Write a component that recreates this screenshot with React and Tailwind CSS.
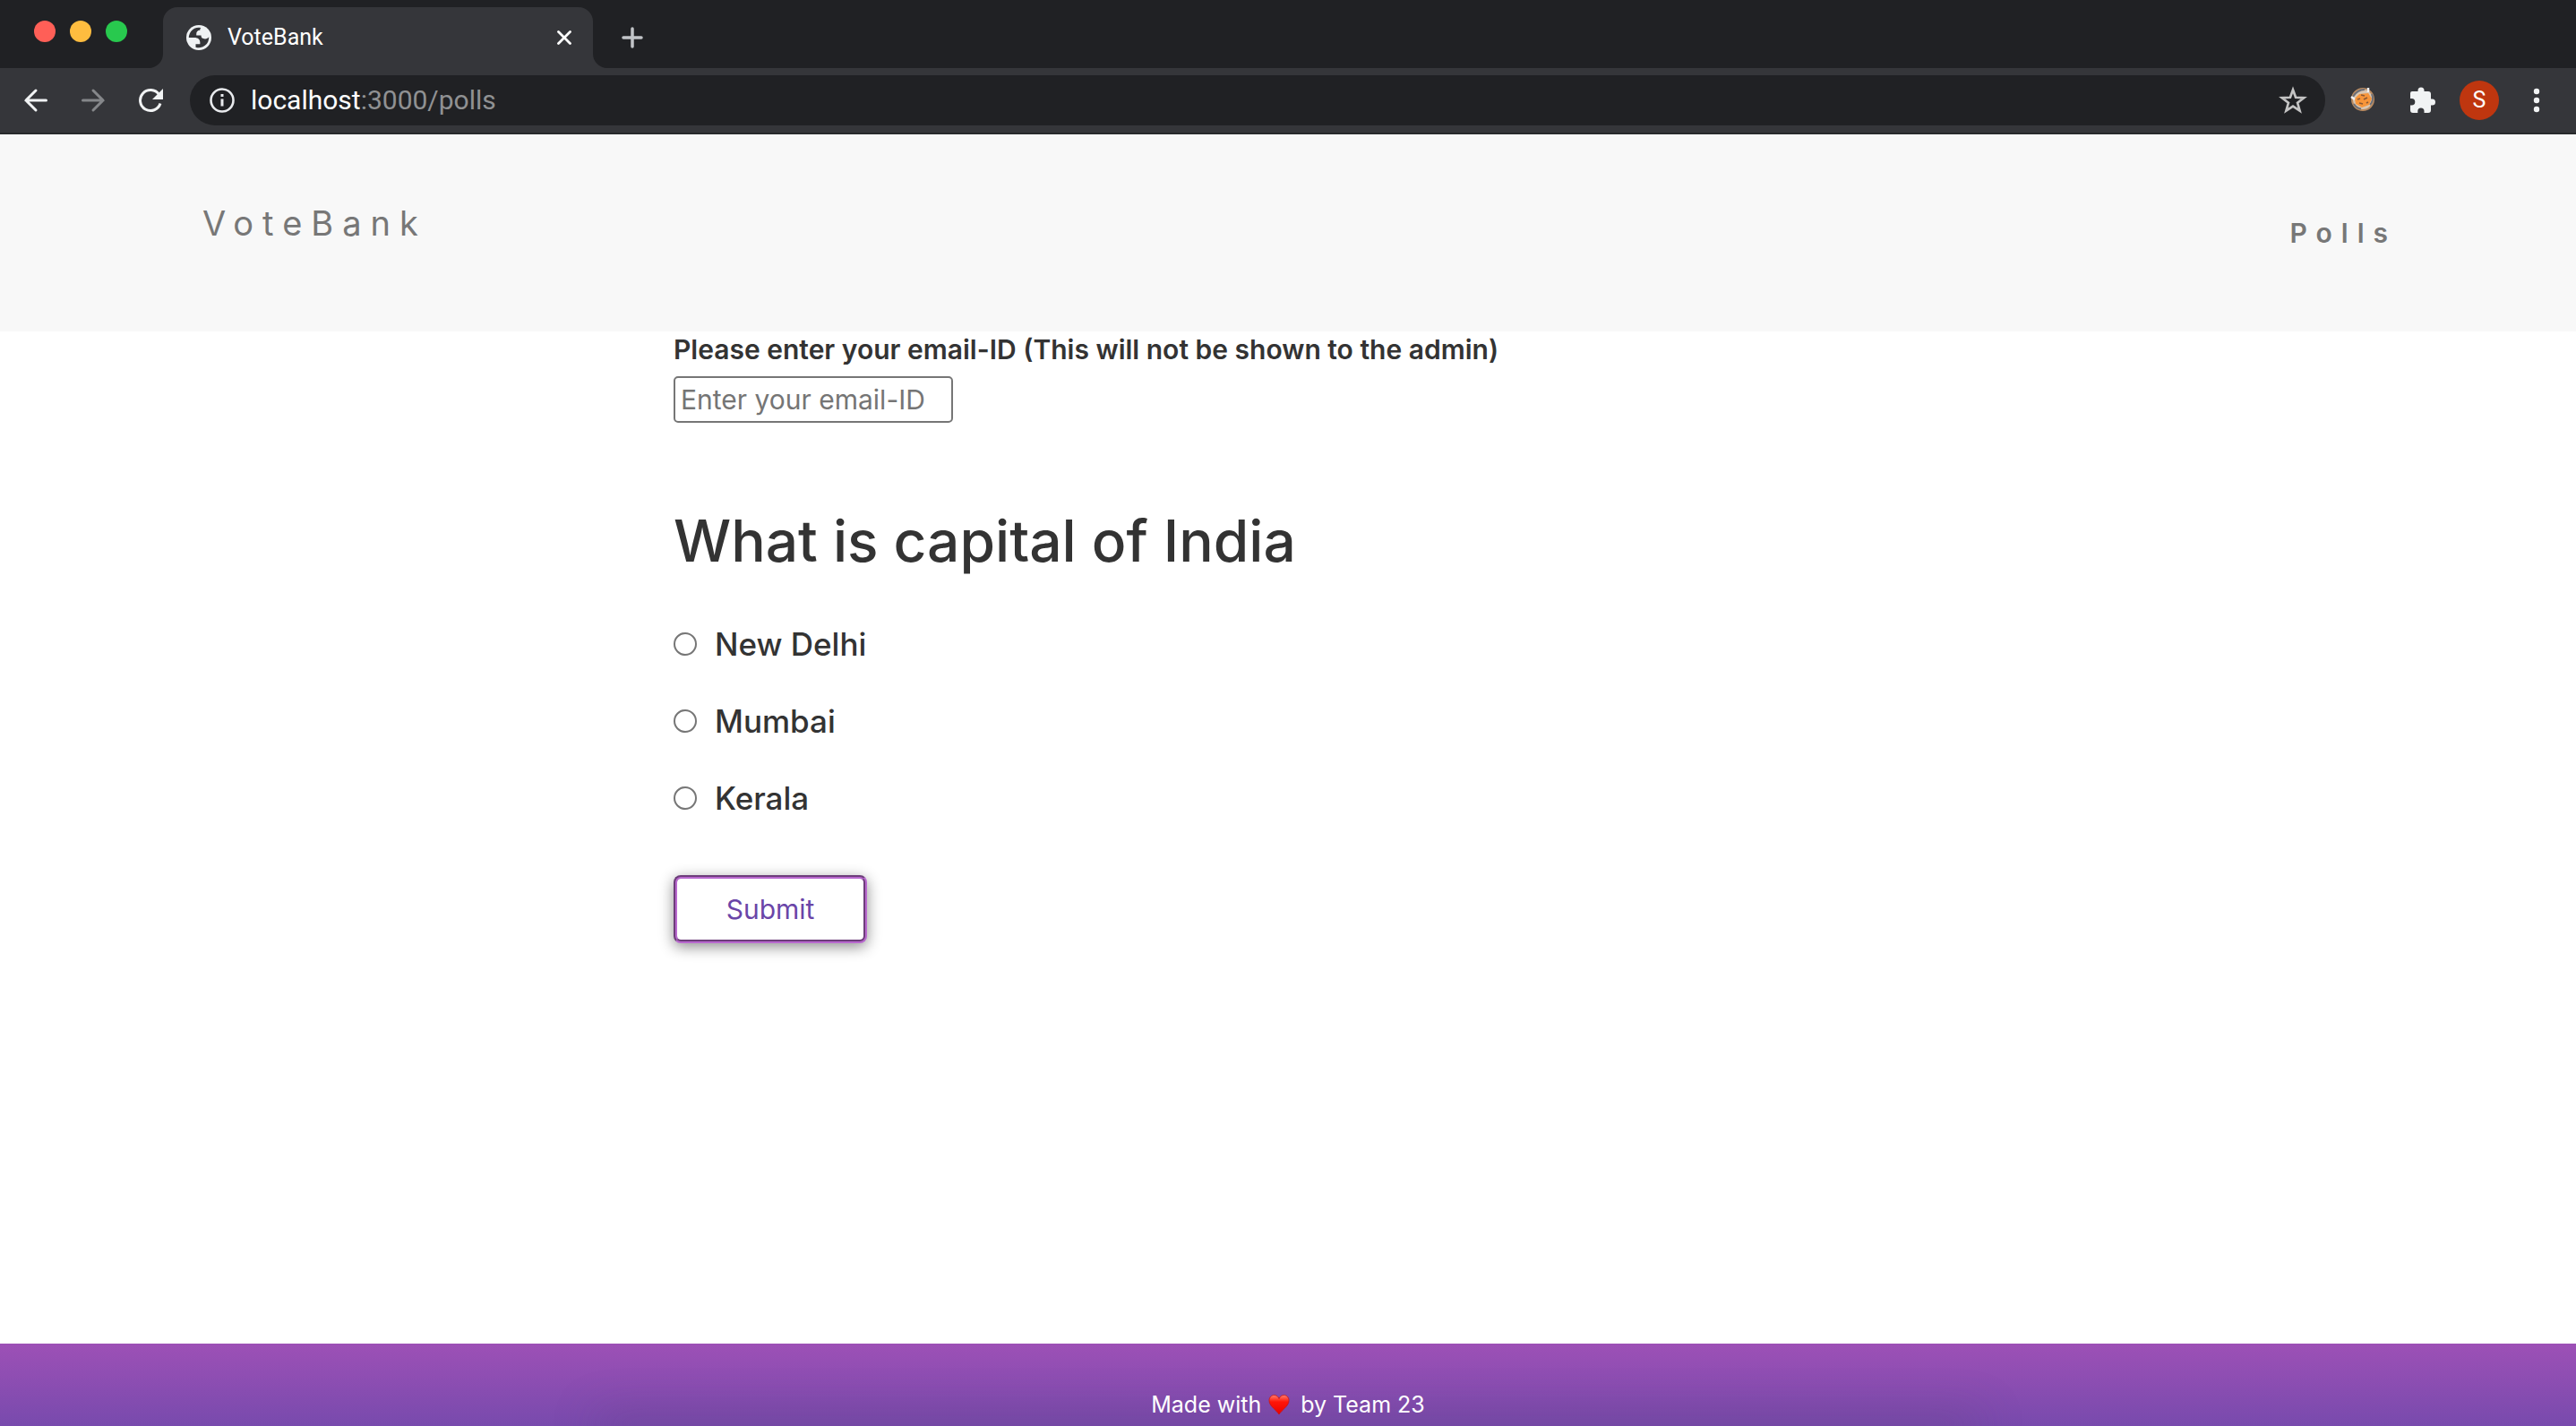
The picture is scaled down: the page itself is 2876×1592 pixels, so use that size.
import React, { useState } from "react";

function TrafficLights() {
  return (
    <div className="flex h-[70px] w-[182px] shrink-0 items-center gap-4 self-start pl-[38px]">
      <button aria-label="Close window" className="size-6 rounded-full bg-[#ff5f57]" />
      <button aria-label="Minimize window" className="size-6 rounded-full bg-[#febc3f]" />
      <button aria-label="Zoom window" className="size-6 rounded-full bg-[#28c94e]" />
    </div>
  );
}

function GlobeIcon() {
  return (
    <svg viewBox="2 2 20 20" className="size-7 shrink-0" aria-hidden="true">
      <circle cx="12" cy="12" r="10" fill="#eff2f4" />
      <path fill="#35363a" d="M4 12h4.400c3.407.022 4.922 1.730 4.543 5.127H9.488v2.470a8.004 8.004 0 0 0 10.498-8.083C19.327 12.504 18.332 13 17 13c-2.137 0-3.206-.916-3.206-2.750h-3.748c-.274-2.728.683-4.092 2.870-4.092 0-.975.327-1.597.811-1.970A8.004 8.004 0 0 0 4 12z" />
    </svg>
  );
}

function TabStrip() {
  return (
    <div className="flex h-[76px] items-end bg-[#202124]">
      <TrafficLights />
      <div className="relative flex h-[68px] w-[480px] items-center rounded-t-2xl bg-[#35363a] pl-[26px] pr-[18px] text-white">
        <svg viewBox="0 0 16 16" className="absolute -left-4 bottom-0 size-4" aria-hidden="true">
          <path d="M16 0v16H0A16 16 0 0 0 16 0z" fill="#35363a" />
        </svg>
        <svg viewBox="0 0 16 16" className="absolute -right-4 bottom-0 size-4" aria-hidden="true">
          <path d="M0 0v16h16A16 16 0 0 1 0 0z" fill="#35363a" />
        </svg>
        <GlobeIcon />
        <span className="ml-[18px] grow text-[25px]">VoteBank</span>
        <button aria-label="Close tab" className="flex size-7 items-center justify-center">
          <svg viewBox="0 0 16 16" className="size-4" stroke="#fff" strokeWidth="2.800" strokeLinecap="round" aria-hidden="true">
            <path d="M1.500 1.500l13 13M14.500 1.500l-13 13" />
          </svg>
        </button>
      </div>
      <button aria-label="New tab" className="ml-7 flex h-[68px] w-8 items-center justify-center">
        <svg viewBox="0 0 24 24" className="size-6" stroke="#c1c4c8" strokeWidth="3.500" strokeLinecap="round" aria-hidden="true">
          <path d="M12 2v20M2 12h20" />
        </svg>
      </button>
    </div>
  );
}

function CookieIcon() {
  return (
    <svg viewBox="0 0 28 28" className="size-7" aria-hidden="true">
      <circle cx="14" cy="13" r="12" fill="#d9c6b2" stroke="#b98a60" strokeWidth="2" />
      <path d="M3 10c3-5 7-8 13-8M4 18c2 3 5 5 8 5.500M24 7c2 4 1 9-2 12" stroke="#6b6f78" strokeWidth="2" fill="none" />
      <path d="M5 12l5-5 10-1 4 6-3 7-8 3-7-4z" fill="#f7953a" />
      <path d="M12 8l4 1M8 13l3-1M15 13l4-2M10 17l4 1M18 17l2-1" stroke="#8c5a35" strokeWidth="1.800" />
      <path d="M20 0v5M1 10l4 3" stroke="#eef0f3" strokeWidth="2.500" />
    </svg>
  );
}

function Toolbar() {
  return (
    <div className="flex h-[74px] items-center border-b-2 border-[#28292b] bg-[#35363a] pl-[26px] pr-9">
      <button aria-label="Back">
        <svg viewBox="0 0 28 28" className="size-7" fill="none" stroke="#f1f3f4" strokeWidth="3" strokeLinecap="round" aria-hidden="true">
          <path d="M25.500 14H3M14 3L3 14l11 11" />
        </svg>
      </button>
      <button aria-label="Forward" className="ml-9">
        <svg viewBox="0 0 28 28" className="size-7" fill="none" stroke="#85878a" strokeWidth="3" strokeLinecap="round" aria-hidden="true">
          <path d="M2.500 14H25M14 3l11 11-11 11" />
        </svg>
      </button>
      <button aria-label="Reload" className="ml-9">
        <svg viewBox="0 0 28 28" className="size-7" fill="none" aria-hidden="true">
          <path d="M23.500 7.500A11.500 11.500 0 1 0 25 17.500" stroke="#f1f3f4" strokeWidth="3" />
          <path d="M28 1v12H16z" fill="#f1f3f4" />
        </svg>
      </button>
      <div className="ml-[30px] flex h-14 grow items-center rounded-full bg-[#202124] pl-[22px] pr-5">
        <svg viewBox="0 0 28 28" className="size-7" fill="none" stroke="#e8eaed" aria-hidden="true">
          <circle cx="14" cy="14" r="12.500" strokeWidth="2.600" />
          <path d="M14 12.500v8M14 7v3" strokeWidth="3" />
        </svg>
        <a href="#polls" className="ml-[18px] grow text-[30px] leading-9 text-[#909193]">
          <span className="text-white">localhost</span>:3000/polls
        </a>
        <button aria-label="Bookmark this page">
          <svg viewBox="0 0 24 24" className="size-8" fill="none" stroke="#c4c4c4" strokeWidth="2" aria-hidden="true">
            <path d="M12 3.200l2.300 6.400 6.900.3-5.400 4.200 1.900 6.600L12 16.900l-5.700 3.800 1.900-6.600L2.800 9.900l6.900-.3z" />
          </svg>
        </button>
      </div>
      <button aria-label="Cookie extension" className="ml-7">
        <CookieIcon />
      </button>
      <button aria-label="Extensions" className="ml-[38px]">
        <svg viewBox="0 0 30 30" className="size-[30px]" fill="#f1f3f4" aria-hidden="true">
          <path d="M3 5h6.500V4a3.500 3.500 0 0 1 7 0v1H21a3 3 0 0 1 3 3v5.500h1.500a3.500 3.500 0 0 1 0 7H24V26a3 3 0 0 1-3 3h-4.500v-2a3.600 3.600 0 0 0-7.200 0v2H4a3 3 0 0 1-3-3v-5.500h1.500a3.800 3.800 0 0 0 0-7.600H1V7a2 2 0 0 1 2-2z" />
        </svg>
      </button>
      <button aria-label="Profile" className="ml-[26px] flex size-11 items-center justify-center rounded-full bg-[#bf360f] text-[25px] text-white">
        S
      </button>
      <button aria-label="Menu" className="ml-[34px]">
        <svg viewBox="0 0 16 28" className="h-7 w-4" fill="#f1f3f4" aria-hidden="true">
          <circle cx="8" cy="4" r="3.200" />
          <circle cx="8" cy="14" r="3.200" />
          <circle cx="8" cy="24" r="3.200" />
        </svg>
      </button>
    </div>
  );
}

function SiteHeader() {
  return (
    <header className="flex h-[220px] items-start justify-between bg-[#f8f8f8] pl-[226px] pr-[200px] text-[#777]">
      <a href="#home" className="mt-[72px] text-[38px] leading-[54px] tracking-[10px]">VoteBank</a>
      <nav className="mt-[88px]">
        <a href="#polls" className="text-[30px] font-semibold leading-[44px] tracking-[10px]">Polls</a>
      </nav>
    </header>
  );
}

const options = ["New Delhi", "Mumbai", "Kerala"];

function PollForm() {
  const [choice, setChoice] = useState("");
  return (
    <form className="mx-auto w-full max-w-[1372px] text-[#333]" onSubmit={(e) => e.preventDefault()}>
      <label htmlFor="email" className="block pt-0.5 text-[30px] font-semibold leading-9">
        Please enter your email-ID (This will not be shown to the admin)
      </label>
      <input
        id="email"
        type="email"
        placeholder="Enter your email-ID"
        className="mt-3 block h-[52px] w-[312px] rounded-[5px] border-2 border-[#767676] px-1.5 text-[30px] placeholder:text-[#757575]"
      />
      <h1 id="question" className="mt-[92px] text-[64px] font-medium leading-20">What is capital of India</h1>
      <fieldset aria-labelledby="question" className="mt-[49px] flex flex-col gap-[34px]">
        {options.map((o) => (
          <label key={o} className="flex h-[52px] items-center gap-5 text-[35px] font-medium">
            <input
              type="radio"
              name="capital"
              value={o}
              checked={choice === o}
              onChange={() => setChoice(o)}
              className="size-[26px] appearance-none rounded-full border-2 border-[#767676] bg-white checked:border-8"
            />
            {o}
          </label>
        ))}
      </fieldset>
      <button
        type="submit"
        className="mt-[60px] h-[76px] w-[216px] rounded-lg border-4 border-[#b868ce] bg-white text-[30px] text-[#6a45a8] shadow-[0_4px_16px_rgba(0,0,0,0.45)] [border-style:groove]"
      >
        Submit
      </button>
    </form>
  );
}

function SiteFooter() {
  return (
    <footer className="flex h-[92px] flex-col items-center justify-end overflow-hidden bg-linear-to-b from-[#9d50b6] to-[#784aad] text-[25px] leading-9 text-white">
      <p className="z-10 flex items-center pb-1.5">
        Made with
        <svg viewBox="0 0 24 24" className="mx-2 size-6" role="img" aria-label="love">
          <defs>
            <linearGradient id="heart" x1="0" y1="0" x2="0" y2="1">
              <stop offset="0" stopColor="#ff8070" />
              <stop offset="0.350" stopColor="#ff1608" />
              <stop offset="1" stopColor="#e80000" />
            </linearGradient>
          </defs>
          <path d="M12 23C9 18 1 14 1 7.500 1 4 3.500 1.500 6.500 1.500c2.500 0 4.500 1.500 5.500 4 1-2.500 3-4 5.500-4 3 0 5.500 2.500 5.500 6C23 14 15 18 12 23z" fill="url(#heart)" stroke="#c81414" strokeWidth="0.800" />
        </svg>
        <span className="pl-1">by Team 23</span>
      </p>
      <div className="h-0 w-[53%] shadow-[0_0_50px_10px_rgba(90,60,110,0.4)]" />
    </footer>
  );
}

export default function App() {
  return (
    <div className="flex min-h-screen flex-col bg-white font-['Inter',sans-serif]">
      <div className="font-['Roboto',sans-serif]">
        <TabStrip />
        <Toolbar />
      </div>
      <SiteHeader />
      <main className="grow">
        <PollForm />
      </main>
      <SiteFooter />
    </div>
  );
}
